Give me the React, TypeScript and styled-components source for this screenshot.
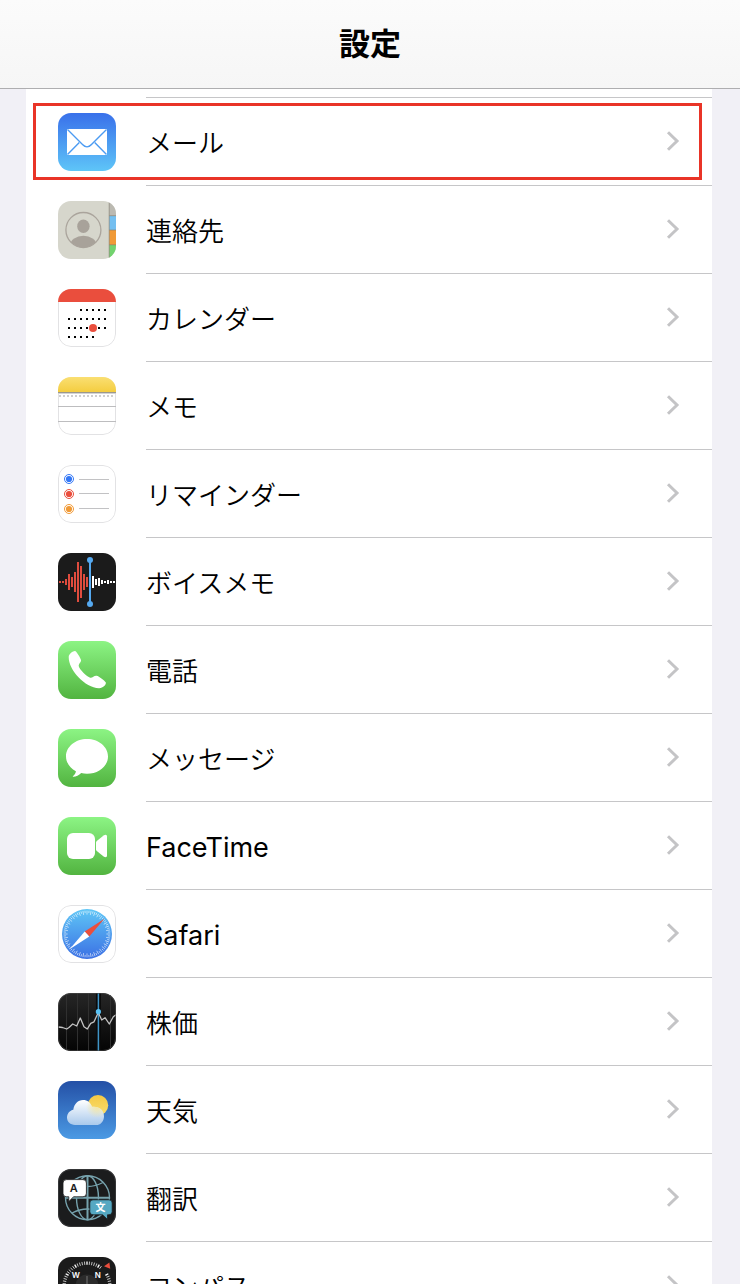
import React from "react";
import styled, { createGlobalStyle } from "styled-components";

const GlobalStyle = createGlobalStyle`
  *, *::before, *::after { box-sizing: border-box; }
  body {
    margin: 0;
    background: #f1f0f6;
    color: #000;
    font-family: Inter, "Noto Sans CJK JP", sans-serif;
  }
`;

const Screen = styled.div`
  display: flex;
  flex-direction: column;
  height: 100vh;
  overflow: hidden;
`;

const Header = styled.header`
  flex: none;
  display: flex;
  align-items: center;
  justify-content: center;
  height: 89px;
  border-bottom: 1px solid #aeaeb0;
  background: linear-gradient(#fbfbfb, #f6f6f6);
`;

const Title = styled.h1`
  margin: 0;
  font-size: 31px;
  line-height: 40px;
  font-weight: 700;
`;

const Content = styled.main`
  flex: 1;
  min-height: 0;
  overflow: hidden;
  padding: 0 28px 0 26px;
`;

const List = styled.ul`
  margin: 0;
  padding: 0;
  list-style: none;
  background: #fff;

  &::before {
    content: "";
    display: block;
    height: 9px;
    margin-left: 120px;
    border-bottom: 1px solid #c6c6c8;
  }
`;

const Row = styled.li<{ $highlighted?: boolean }>`
  position: relative;

  ${({ $highlighted }) =>
    $highlighted &&
    `
    &::after {
      content: "";
      position: absolute;
      inset: 5px 10px 6px 7px;
      border: 3px solid #e93427;
      pointer-events: none;
    }
  `}
`;

const RowLink = styled.a`
  display: flex;
  align-items: center;
  gap: 30px;
  height: 88px;
  padding-left: 32px;
  color: inherit;
  text-decoration: none;
`;

const AppIcon = styled.svg`
  flex: none;
  width: 58px;
  height: 58px;
  border-radius: 13px;
`;

const RowBody = styled.span`
  flex: 1;
  display: flex;
  align-items: center;
  justify-content: space-between;
  height: 88px;
  padding-right: 32px;
  border-bottom: 1px solid #c6c6c8;
`;

const Label = styled.span<{ $latin: boolean }>`
  padding-top: 4px;
  font-size: ${({ $latin }) => ($latin ? 27 : 26)}px;
  font-weight: ${({ $latin }) => ($latin ? 400 : 350)};
  line-height: 36px;
`;

const Chevron = styled.svg`
  flex: none;
  width: 14px;
  height: 24px;
`;

function Fill({ id, from, to }: { id: string; from: string; to: string }) {
  return (
    <>
      <defs>
        <linearGradient id={id} x1="0" y1="0" x2="0" y2="1">
          <stop offset="0" stopColor={from} />
          <stop offset="1" stopColor={to} />
        </linearGradient>
      </defs>
      <rect width="58" height="58" fill={`url(#${id})`} />
    </>
  );
}

const Outline = () => (
  <rect x="0.5" y="0.5" width="57" height="57" rx="12.5" fill="none" stroke="#e2e2e4" />
);

const ticks = (count: number) => Array.from({ length: count }, (_, i) => (i * 360) / count);

const MailArt = () => (
  <>
    <Fill id="mail" from="#3970ea" to="#5ec5f8" />
    <rect x="9" y="16" width="40" height="26" rx="0.5" fill="#fff" />
    <g fill="none" stroke="#4b9bf2" strokeWidth="1.4">
      <path d="M9.5 16.5 L24.5 31.5 Q29 36.2 33.5 31.5 L48.5 16.5" />
      <path d="M9.5 41.5 L21.3 29.4 M48.5 41.5 L36.7 29.4" />
    </g>
  </>
);

const ContactsArt = () => (
  <>
    <rect width="58" height="58" fill="#d6d6cc" />
    <rect x="51" width="7" height="15" fill="#bbb9b1" />
    <rect x="51" y="15" width="7" height="14" fill="#74bff0" />
    <rect x="51" y="29" width="7" height="15" fill="#f09a37" />
    <rect x="51" y="44" width="7" height="14" fill="#72d36e" />
    <path d="M51 14.7h7M51 29h7M51 43.8h7" stroke="#807b70" strokeOpacity="0.6" />
    <path d="M51.2 0v58" stroke="#928e84" strokeWidth="0.8" />
    <clipPath id="contact-ring">
      <circle cx="25.4" cy="29" r="17.5" />
    </clipPath>
    <circle cx="25.4" cy="29" r="17.5" fill="none" stroke="#aaa49c" strokeWidth="1.3" />
    <ellipse cx="25.4" cy="25.2" rx="6.2" ry="6.8" fill="#a8a29a" />
    <ellipse cx="25.4" cy="43.6" rx="13" ry="8.8" fill="#a8a29a" clipPath="url(#contact-ring)" />
  </>
);

const calendarRows = [
  { y: 21, from: 2, to: 6 },
  { y: 30, from: 0, to: 6 },
  { y: 39, from: 0, to: 6 },
  { y: 48, from: 0, to: 4 },
];

const CalendarArt = () => (
  <>
    <rect width="58" height="58" fill="#fff" />
    <Outline />
    <rect width="58" height="13" fill="#ea4e3d" />
    {calendarRows.map(({ y, from, to }) =>
      Array.from({ length: to - from + 1 }, (_, i) => (
        <rect key={`${y}-${i}`} x={10 + (from + i) * 6} y={y - 1} width="2" height="2" />
      )),
    )}
    <circle cx="35" cy="39" r="4" fill="#ea4e3d" />
  </>
);

const NotesArt = () => (
  <>
    <defs>
      <linearGradient id="notes" x1="0" y1="0" x2="0" y2="1">
        <stop offset="0" stopColor="#fadf72" />
        <stop offset="1" stopColor="#f4cd40" />
      </linearGradient>
    </defs>
    <rect width="58" height="58" fill="#fff" />
    <Outline />
    <rect width="58" height="15" fill="url(#notes)" />
    <path d="M0 15.5h58" stroke="#9b988f" />
    <path d="M0 16.5h58" stroke="#d4d4d4" />
    <path d="M1 19h56" stroke="#cfcfcf" strokeWidth="2" strokeDasharray="2 2" />
    <path d="M0 29.5h58M0 44.5h58" stroke="#bdbdbf" />
  </>
);

const reminders = [
  { y: 14, line: 14.5, color: "#3478f6" },
  { y: 29, line: 28.5, color: "#ea4e3d" },
  { y: 44, line: 43.5, color: "#f09a37" },
];

const RemindersArt = () => (
  <>
    <rect width="58" height="58" fill="#fff" />
    <Outline />
    {reminders.map(({ y, line, color }) => (
      <g key={y}>
        <circle cx="11" cy={y} r="4.5" fill="none" stroke={color} />
        <circle cx="11" cy={y} r="3.1" fill={color} />
        <path d={`M21 ${line}h30`} stroke="#c2c2c4" />
      </g>
    ))}
  </>
);

const redBars = [2, 2, 6, 16, 10, 20, 40, 32, 16, 10];
const whiteBars = [12, 6, 8, 4, 2, 4, 2, 2];

const VoiceMemosArt = () => (
  <>
    <rect width="58" height="58" fill="#1b1b1b" />
    {redBars.map((h, i) => (
      <rect key={i} x={1 + i * 3} y={29 - h / 2} width="2" height={h} fill="#e04c3e" />
    ))}
    {whiteBars.map((h, i) => (
      <rect key={i} x={34 + i * 3} y={29 - h / 2} width="2" height={h} fill="#fff" />
    ))}
    <path d="M32 7v44" stroke="#55a9f0" strokeWidth="2" />
    <circle cx="32" cy="7" r="3" fill="#55a9f0" />
    <circle cx="32" cy="51" r="3" fill="#55a9f0" />
  </>
);

const PhoneArt = () => (
  <>
    <Fill id="phone" from="#8cf484" to="#52b440" />
    <path
      fill="#fff"
      d="M17.5 10.3C16.2 9.3 10.8 12.6 10.7 16C10.5 29 27 46.8 41 47.3C45 47.4 48.8 43.2 47.7 41.3C47 39.9 41 35.2 38.6 34.7C36 34.3 34.6 37.1 32.2 36.7C29 36 21 28 20.7 25C20.6 22.6 23.4 21 23 19C22.5 17 19 11.3 17.5 10.3Z"
    />
  </>
);

const MessagesArt = () => (
  <>
    <Fill id="messages" from="#8cf484" to="#52b440" />
    <path
      fill="#fff"
      d="M29 10C40.6 10 50 17.7 50 27.4S40.6 44.8 29 44.8C27 44.8 25 44.6 23.2 44.1C21 46.2 18 47.8 15.3 47.8C14.6 47.8 14.7 47.3 15.1 47C16.7 45.6 17.8 44 17.9 42.2C12 39.1 8 33.6 8 27.4C8 17.7 17.4 10 29 10Z"
    />
  </>
);

const FaceTimeArt = () => (
  <>
    <Fill id="facetime" from="#8cf484" to="#52b440" />
    <rect x="9" y="16" width="28" height="26" rx="6" fill="#fff" />
    <path
      fill="#fff"
      d="M38 25.8Q38 24.8 38.8 24L45.6 18.5Q46.7 17.8 47.8 17.8Q49 17.8 49 19.4V38.6Q49 40.2 47.8 40.2Q46.7 40.2 45.6 39.5L38.8 34Q38 33.2 38 32.2Z"
    />
  </>
);

const SafariArt = () => (
  <>
    <defs>
      <linearGradient id="safari" x1="0" y1="0" x2="0" y2="1">
        <stop offset="0" stopColor="#5fc6f6" />
        <stop offset="1" stopColor="#3b70e4" />
      </linearGradient>
    </defs>
    <rect width="58" height="58" fill="#fff" />
    <Outline />
    <circle cx="29" cy="29" r="25" fill="url(#safari)" />
    {ticks(72).map((angle, i) => (
      <path
        key={angle}
        d={i % 2 ? "M29 5.6v2.4" : "M29 5.6v4"}
        stroke="#fff"
        strokeWidth="0.7"
        strokeOpacity="0.8"
        transform={`rotate(${angle} 29 29)`}
      />
    ))}
    <path d="M46.4 13.8L26.7 26.6L31.3 31.4Z" fill="#ea4e3d" />
    <path d="M11.6 44.2L26.7 26.6L31.3 31.4Z" fill="#fff" />
  </>
);

const StocksArt = () => (
  <>
    <Fill id="stocks" from="#262626" to="#040404" />
    <path d="M8.5 0v58M19.5 0v58M30.5 0v58M52.5 0v58" stroke="#303030" />
    <path d="M40.4 0v58" stroke="#0a0a0a" strokeWidth="5" />
    <path d="M40.4 0v58" stroke="#3f94c6" strokeWidth="1.5" />
    <path
      d="M0.5 34L4.5 34.5L8.7 36L11 34.5L14.7 31L18.7 33L22.3 25L26 33.7L29.3 36L32.7 30.3L36 28.8L40.3 19.5L43.7 27L47 24.7L51.3 31L55.3 23.7L58 21.7"
      fill="none"
      stroke="#c4c4c4"
      strokeWidth="1.3"
      strokeLinejoin="round"
    />
    <circle cx="40.4" cy="18.7" r="2.6" fill="#5ac3f5" />
    <rect x="0.5" y="0.5" width="57" height="57" rx="12.5" fill="none" stroke="#4a4a4a" strokeWidth="0.6" />
  </>
);

const WeatherArt = () => (
  <>
    <Fill id="weather" from="#2450a6" to="#4b9ae4" />
    <defs>
      <linearGradient id="sun" x1="0" y1="0" x2="0" y2="1">
        <stop offset="0" stopColor="#f5c944" />
        <stop offset="1" stopColor="#f8de70" />
      </linearGradient>
      <linearGradient id="cloud" gradientUnits="userSpaceOnUse" x1="0" y1="19" x2="0" y2="44">
        <stop offset="0" stopColor="#ffffff" />
        <stop offset="1" stopColor="#a9c9ec" />
      </linearGradient>
      <radialGradient id="glow">
        <stop offset="0" stopColor="#f5e59a" stopOpacity="0.9" />
        <stop offset="1" stopColor="#f5e59a" stopOpacity="0" />
      </radialGradient>
      <clipPath id="cloud-shape">
        <path d="M17 44C12.3 44 9 40.7 9 36.6C9 32.4 12 29.3 15.3 28.7C16 23 20 19 25 19C29.4 19 32.6 21.6 34 25.8C40.5 24.8 46 28.8 46 35.2C46 40.4 42.6 44 38 44Z" />
      </clipPath>
    </defs>
    <circle cx="40" cy="24.2" r="10.2" fill="url(#sun)" />
    <g clipPath="url(#cloud-shape)">
      <rect x="8" y="18" width="40" height="27" fill="url(#cloud)" />
      <circle cx="39" cy="26" r="11" fill="url(#glow)" />
    </g>
  </>
);

const TranslateArt = () => (
  <>
    <rect width="58" height="58" fill="#1b1c1d" />
    <rect x="0.5" y="0.5" width="57" height="57" rx="12.5" fill="none" stroke="#48484a" strokeWidth="0.6" />
    <g fill="none" stroke="#76a2ad" strokeWidth="1.4">
      <circle cx="29.5" cy="28.7" r="22" />
      <ellipse cx="29.5" cy="28.7" rx="11" ry="22" />
      <path d="M29.5 6.7v44M7.5 28.7h44" strokeWidth="2" />
      <path d="M14 13.5Q29.5 21.5 45 13.5M14 44Q29.5 36 45 44" />
    </g>
    <path
      fill="#fff"
      stroke="#1b1c1d"
      strokeWidth="0.8"
      d="M8.5 10.6H25Q28.4 10.6 28.4 14V24.3Q28.4 27.8 25 27.8H15.5L10.8 32.6V27.8H8.5Q5 27.8 5 24.3V14Q5 10.6 8.5 10.6Z"
    />
    <path
      fill="#55a8c2"
      stroke="#1b1c1d"
      strokeWidth="0.8"
      d="M35 30.8H51Q54.2 30.8 54.2 34V42.6Q54.2 45.8 51 45.8H49.5V50.4L44.5 45.8H35Q31.8 45.8 31.8 42.6V34Q31.8 30.8 35 30.8Z"
    />
    <text x="15.8" y="23.4" textAnchor="middle" fontSize="11" fontWeight="600" fill="#1b1c1d">
      A
    </text>
    <text x="42.5" y="42" textAnchor="middle" fontSize="10" fontWeight="700" fill="#fff">
      文
    </text>
  </>
);

const compassTicks = ticks(60).filter((angle) => angle < 38 || angle > 58);

const CompassArt = () => (
  <>
    <rect width="58" height="58" fill="#1b1b1b" />
    <circle cx="29" cy="29" r="11.5" fill="#2b2b2b" />
    {compassTicks.map((angle) => (
      <path
        key={angle}
        d="M29 4.4v3.4"
        stroke="#fff"
        strokeWidth={angle % 30 === 0 ? 1.3 : 0.9}
        strokeOpacity={angle % 30 === 0 ? 1 : 0.75}
        transform={`rotate(${angle} 29 29)`}
      />
    ))}
    <path d="M29 19v20M19 29h20" stroke="#5a5a5a" strokeWidth="1.6" />
    <path d="M51.4 5.4L52.2 11.8L46 9.2Z" fill="#ea4e3d" />
    <g fill="#fff" fontSize="8" fontWeight="600" textAnchor="middle">
      <text x="17.8" y="21.2">W</text>
      <text x="39.8" y="21.2">N</text>
    </g>
  </>
);

interface Item {
  id: string;
  label: string;
  Art: React.ComponentType;
  latin?: boolean;
  highlighted?: boolean;
}

const items: Item[] = [
  { id: "mail", label: "メール", Art: MailArt, highlighted: true },
  { id: "contacts", label: "連絡先", Art: ContactsArt },
  { id: "calendar", label: "カレンダー", Art: CalendarArt },
  { id: "notes", label: "メモ", Art: NotesArt },
  { id: "reminders", label: "リマインダー", Art: RemindersArt },
  { id: "voice-memos", label: "ボイスメモ", Art: VoiceMemosArt },
  { id: "phone", label: "電話", Art: PhoneArt },
  { id: "messages", label: "メッセージ", Art: MessagesArt },
  { id: "facetime", label: "FaceTime", Art: FaceTimeArt, latin: true },
  { id: "safari", label: "Safari", Art: SafariArt, latin: true },
  { id: "stocks", label: "株価", Art: StocksArt },
  { id: "weather", label: "天気", Art: WeatherArt },
  { id: "translate", label: "翻訳", Art: TranslateArt },
  { id: "compass", label: "コンパス", Art: CompassArt },
];

export default function App() {
  return (
    <Screen lang="ja">
      <GlobalStyle />
      <Header>
        <Title>設定</Title>
      </Header>
      <Content>
        <List>
          {items.map(({ id, label, Art, latin, highlighted }) => (
            <Row key={id} $highlighted={highlighted}>
              <RowLink href={`#${id}`}>
                <AppIcon viewBox="0 0 58 58" aria-hidden="true">
                  <Art />
                </AppIcon>
                <RowBody>
                  <Label $latin={Boolean(latin)}>{label}</Label>
                  <Chevron viewBox="0 0 14 24" aria-hidden="true">
                    <path d="M2 2.2L11 11L2 19.8" fill="none" stroke="#c4c4c6" strokeWidth="3" />
                  </Chevron>
                </RowBody>
              </RowLink>
            </Row>
          ))}
        </List>
      </Content>
    </Screen>
  );
}
